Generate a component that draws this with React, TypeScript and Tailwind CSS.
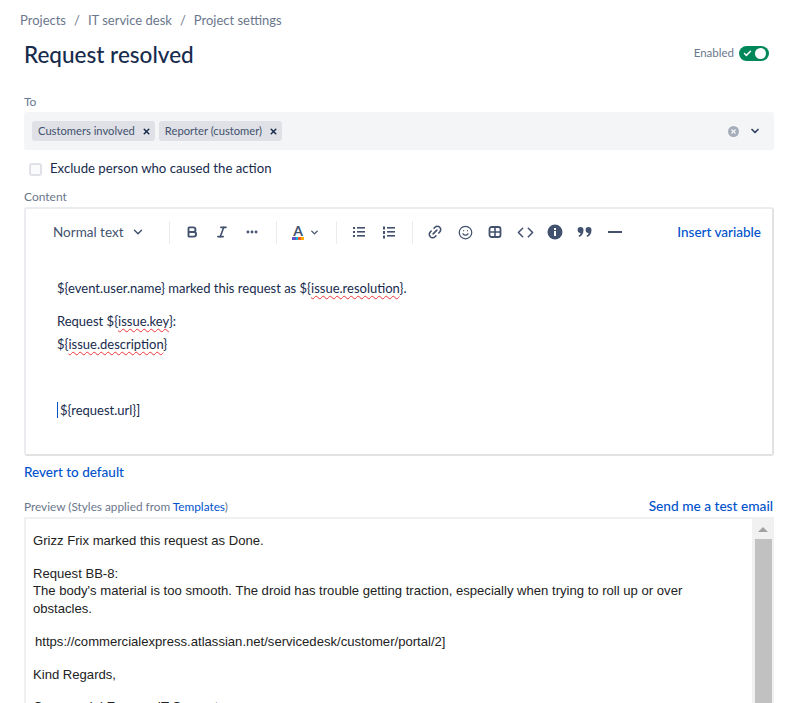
import { Check, ChevronDown, Italic, Bold, MoreHorizontal, Link2, Smile, Code, X } from "lucide-react";
import type { ReactNode } from "react";

const ui = "font-['Lato','Noto_Sans',sans-serif]";
const ico = "text-[#42526e]";

function Tag({ label, className }: { label: string; className: string }) {
  return (
    <span className={`flex h-5 items-center rounded-[3px] bg-[#dfe1e6] pl-[6px] text-[11.2px] text-[#42526e] ${className}`}>
      {label}
      <X size={9} strokeWidth={4} className="ml-[7px] mr-[4px] text-[#172b4d]" />
    </span>
  );
}

function Divider({ className }: { className: string }) {
  return <span className={`h-[23px] w-px bg-[#ebecf0] ${className}`} />;
}

function Slot({ children }: { children: ReactNode }) {
  return <span className={`flex w-[30px] items-center justify-center ${ico}`}>{children}</span>;
}

function Squiggle({ children }: { children: string }) {
  return <span className="underline decoration-[#f0353b] decoration-wavy decoration-1 underline-offset-2">{children}</span>;
}

function Toolbar() {
  return (
    <div className="flex h-[46px] items-center pl-[27px] pr-[11px]">
      <span className="w-[71px] whitespace-nowrap text-[13.500px] text-[#42526e]">Normal text</span>
      <ChevronDown size={14} strokeWidth={2.5} className={`ml-[7px] ${ico}`} />
      <Divider className="ml-[24px]" />
      <span className="w-[7px]" />
      <Slot><Bold size={14} strokeWidth={3.2} /></Slot>
      <Slot><Italic size={14} strokeWidth={2.8} /></Slot>
      <Slot><MoreHorizontal size={14} strokeWidth={3} /></Slot>
      <Divider className="ml-[9px]" />
      <span className="relative ml-[15px] flex h-[16px] w-[12px] flex-col items-center">
        <span className="text-[14px] font-bold leading-[13px] text-[#42526e]">A</span>
        <span className="absolute bottom-0 h-[3px] w-[12px] bg-[linear-gradient(90deg,#6554c0_0_30%,#00b8d9_30%_50%,#ff5630_50%_75%,#ffab00_75%)]" />
      </span>
      <ChevronDown size={11} strokeWidth={3} className={`ml-[5px] ${ico}`} />
      <Divider className="ml-[16px]" />
      <span className="w-[7px]" />
      <Slot>
        <svg width="14" height="14" viewBox="0 0 14 14" fill="currentColor">
          <rect x="1" y="2" width="2" height="2" />
          <rect x="1" y="6" width="2" height="2" />
          <rect x="1" y="10" width="2" height="2" />
          <rect x="5" y="2" width="8" height="1.6" />
          <rect x="5" y="6" width="8" height="1.6" />
          <rect x="5" y="10" width="8" height="1.6" />
        </svg>
      </Slot>
      <Slot>
        <svg width="14" height="14" viewBox="0 0 14 14" fill="currentColor">
          <rect x="1" y="1.500" width="2" height="3" />
          <rect x="1" y="6" width="2" height="3" />
          <rect x="1" y="10.500" width="2" height="3" />
          <rect x="5" y="2" width="8" height="1.6" />
          <rect x="5" y="6" width="8" height="1.6" />
          <rect x="5" y="10" width="8" height="1.6" />
        </svg>
      </Slot>
      <Divider className="ml-[8px]" />
      <span className="w-[7px]" />
      <Slot><Link2 size={16} strokeWidth={2.4} className="-rotate-45" /></Slot>
      <Slot><Smile size={15} strokeWidth={2} /></Slot>
      <Slot>
        <svg width="14" height="14" viewBox="0 0 14 14">
          <rect x="1.500" y="2" width="11" height="10" rx="2" fill="none" stroke="currentColor" strokeWidth="1.800" />
          <path d="M7 2v10M1.500 7h11" stroke="currentColor" strokeWidth="1.600" />
        </svg>
      </Slot>
      <Slot><Code size={17} strokeWidth={2.2} /></Slot>
      <Slot>
        <svg width="16" height="16" viewBox="0 0 16 16">
          <circle cx="8" cy="8" r="7.500" fill="currentColor" />
          <rect x="7" y="7" width="2" height="5" fill="#fff" />
          <rect x="7" y="4" width="2" height="2" fill="#fff" />
        </svg>
      </Slot>
      <Slot>
        <svg width="16" height="14" viewBox="0 0 16 14" fill="currentColor">
          <path d="M3.500 2a3 3 0 0 1 3 3c0 3.400-1.600 6-4.400 7l-.6-1.200c1.200-.7 2-1.600 2.200-2.800A3 3 0 0 1 3.500 2z" />
          <path d="M11.500 2a3 3 0 0 1 3 3c0 3.400-1.600 6-4.400 7l-.6-1.200c1.200-.7 2-1.600 2.200-2.800A3 3 0 0 1 11.500 2z" />
        </svg>
      </Slot>
      <Slot><span className="h-[2px] w-[14px] bg-[#42526e]" /></Slot>
      <a className="ml-auto text-[13.500px] font-medium text-[#0052cc]">Insert variable</a>
    </div>
  );
}

export default function App() {
  return (
    <div className={`h-[703px] overflow-hidden bg-white pl-6 pr-[17px] ${ui}`}>
      <nav className="-ml-1 flex h-[41px] items-center text-[13px] text-[#6b778c]">
        <span>Projects</span>
        <span className="mx-[8px]">/</span>
        <span>IT service desk</span>
        <span className="mx-[8px]">/</span>
        <span>Project settings</span>
      </nav>

      <div className="flex h-[28px] items-center justify-between">
        <h1 className="text-[22.500px] font-medium leading-[28px] text-[#172b4d]">Request resolved</h1>
        <div className="mb-1 mr-[5px] flex items-center">
          <span className="text-[11.500px] text-[#6b778c]">Enabled</span>
          <span className="ml-[5px] flex h-[15px] w-[30px] items-center justify-between rounded-full bg-[#00875a] px-[3px]">
            <Check size={9} strokeWidth={4} className="ml-[1px] text-white" />
            <span className="h-[11px] w-[11px] rounded-full bg-white" />
          </span>
        </div>
      </div>

      <label className="mt-[24px] block h-[17px] text-[12px] leading-[17px] text-[#6b778c]">To</label>
      <div className="mt-[2px] flex h-[38px] items-center rounded-[3px] bg-[#f4f5f7] pl-2 pr-[13px]">
        <Tag label="Customers involved" className="" />
        <Tag label="Reporter (customer)" className="ml-1" />
        <span className="ml-auto flex h-[11px] w-[11px] items-center justify-center rounded-full bg-[#a5adba]">
          <X size={7} strokeWidth={4} className="text-[#f4f5f7]" />
        </span>
        <ChevronDown size={12} strokeWidth={3.5} className="ml-[10px] text-[#344563]" />
      </div>

      <div className="mt-[12px] flex h-[14px] items-center pl-[5px]">
        <span className="h-[13px] w-[13px] rounded-[3px] border-2 border-[#dfe1e6] bg-[#fafbfc]" />
        <span className="ml-[8px] text-[13.200px] text-[#172b4d]">Exclude person who caused the action</span>
      </div>

      <label className="mt-[12px] block h-[17px] text-[12px] leading-[17px] text-[#6b778c]">Content</label>

      <div className="mt-[2px] h-[249px] rounded-[3px] border-2 border-[#ebecf0] border-b-[#e2e2e2] border-r-[#e2e2e2]">
        <Toolbar />
        <div className="pl-[31px] pt-[22px] text-[13px] text-[#172b4d]">
          <p className="h-[22px] leading-[22px]">
            {"${event.user.name} marked this request as ${"}
            <Squiggle>issue.resolution</Squiggle>
            {"}."}
          </p>
          <p className="mt-[11px] h-[22px] leading-[22px]">
            {"Request ${"}
            <Squiggle>issue.key</Squiggle>
            {"}:"}
          </p>
          <p className="mt-[1px] h-[22px] leading-[22px]">
            {"${"}
            <Squiggle>issue.description</Squiggle>
            {"}"}
          </p>
          <p className="mt-[44px] flex h-[22px] items-center leading-[22px]">
            <span className="mr-[2px] h-[16px] w-px bg-[#0052cc]" />
            {"${request.url}]"}
          </p>
        </div>
      </div>

      <a className="mt-[6px] block h-[20px] text-[13.500px] font-medium leading-[20px] text-[#0052cc]">Revert to default</a>

      <div className="mt-[16px] flex h-[17px] items-center justify-between">
        <span className="text-[11.800px] text-[#6b778c]">
          Preview (Styles applied from <a className="text-[#0052cc]">Templates</a>)
        </span>
        <a className="mr-[1px] text-[13.700px] font-medium text-[#0052cc]">Send me a test email</a>
      </div>

      <div className="mt-[2px] flex h-[200px] border-2 border-b-0 border-r-0 border-[#f0f0f0]">
        <div className="min-w-0 flex-1 pl-[7px] pr-[37px] pt-[13px] font-['Liberation_Sans',Arial,sans-serif] text-[13.100px] leading-[17.400px] text-[#222]">
          <p>Grizz Frix marked this request as Done.</p>
          <p className="mt-[15.500px]">
            Request BB-8:
            <br />
            The body's material is too smooth. The droid has trouble getting traction, especially when trying to roll up or over obstacles.
          </p>
          <p className="mt-[15.500px] pl-[2px]">https://commercialexpress.atlassian.net/servicedesk/customer/portal/2]</p>
          <p className="mt-[15.500px]">Kind Regards,</p>
          <p className="mt-[15.500px]">Commercial Express IT Support</p>
        </div>
        <div className="flex w-[22px] shrink-0 flex-col items-center bg-[#f1f1f1]">
          <span className="mt-[8px] h-0 w-0 border-x-[5px] border-b-[5px] border-x-transparent border-b-[#a3a3a3]" />
          <span className="mt-[7px] w-[17px] flex-1 bg-[#c1c1c1]" />
        </div>
      </div>
    </div>
  );
}
